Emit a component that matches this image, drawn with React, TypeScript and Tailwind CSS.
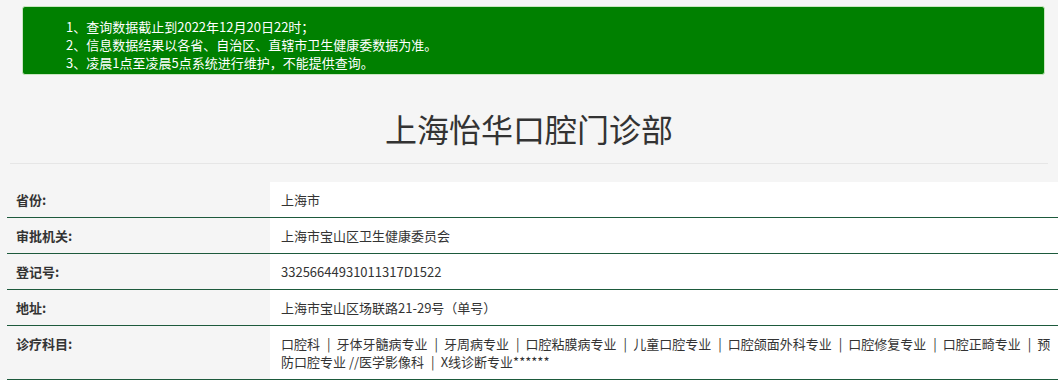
const notices = [
  '1、查询数据截止到2022年12月20日22时；',
  '2、信息数据结果以各省、自治区、直辖市卫生健康委数据为准。',
  '3、凌晨1点至凌晨5点系统进行维护，不能提供查询。',
]

const specialties = [
  '口腔科',
  '牙体牙髓病专业',
  '牙周病专业',
  '口腔粘膜病专业',
  '儿童口腔专业',
  '口腔颌面外科专业',
  '口腔修复专业',
  '口腔正畸专业',
  '预防口腔专业 //医学影像科',
  'X线诊断专业******',
]

const rows: {label: string; value: React.ReactNode}[] = [
  {label: '省份:', value: '上海市'},
  {label: '审批机关:', value: '上海市宝山区卫生健康委员会'},
  {label: '登记号:', value: '33256644931011317D1522'},
  {label: '地址:', value: '上海市宝山区场联路21-29号（单号）'},
  {
    label: '诊疗科目:',
    value: specialties.map((s, i) => (
      <span key={s}>
        {i > 0 && <span className="pl-[7px] pr-[6px]">|</span>}
        {s}
      </span>
    )),
  },
]

function Notice() {
  return (
    <div className="ml-[22px] mr-[13px] mt-[6px] h-[69px] rounded-[3px] border border-[#c8e6c0] bg-[#008000] pl-[43px] pt-[11px] text-[13px] leading-[18px] text-white">
      {notices.map(n => (
        <p key={n}>{n}</p>
      ))}
    </div>
  )
}

function DetailTable() {
  return (
    <table className="ml-[7px] w-[1051px] border-collapse text-[13px] leading-[18px] text-[#333]">
      <tbody>
        {rows.map(r => (
          <tr key={r.label} className="border-b border-[#1d5a3c] align-top">
            <td className="w-[263px] px-[9px] pt-[9px] pb-[8px] font-bold">{r.label}</td>
            <td className="bg-white pt-[9px] pb-[8px] pl-[11px] pr-0">{r.value}</td>
          </tr>
        ))}
      </tbody>
    </table>
  )
}

export default function App() {
  return (
    <div
      className="h-[380px] w-[1058px] overflow-hidden bg-[#f5f5f5]"
      style={{fontFamily: '"Noto Sans CJK SC", "Noto Sans", sans-serif'}}
    >
      <Notice />
      <h1 className="mt-[33px] text-center text-[32px] leading-[40px] font-normal text-[#333]">
        上海怡华口腔门诊部
      </h1>
      <div className="mx-[10px] mt-[15px] mb-[18px] border-t border-[#e6e6e6]" />
      <DetailTable />
    </div>
  )
}
